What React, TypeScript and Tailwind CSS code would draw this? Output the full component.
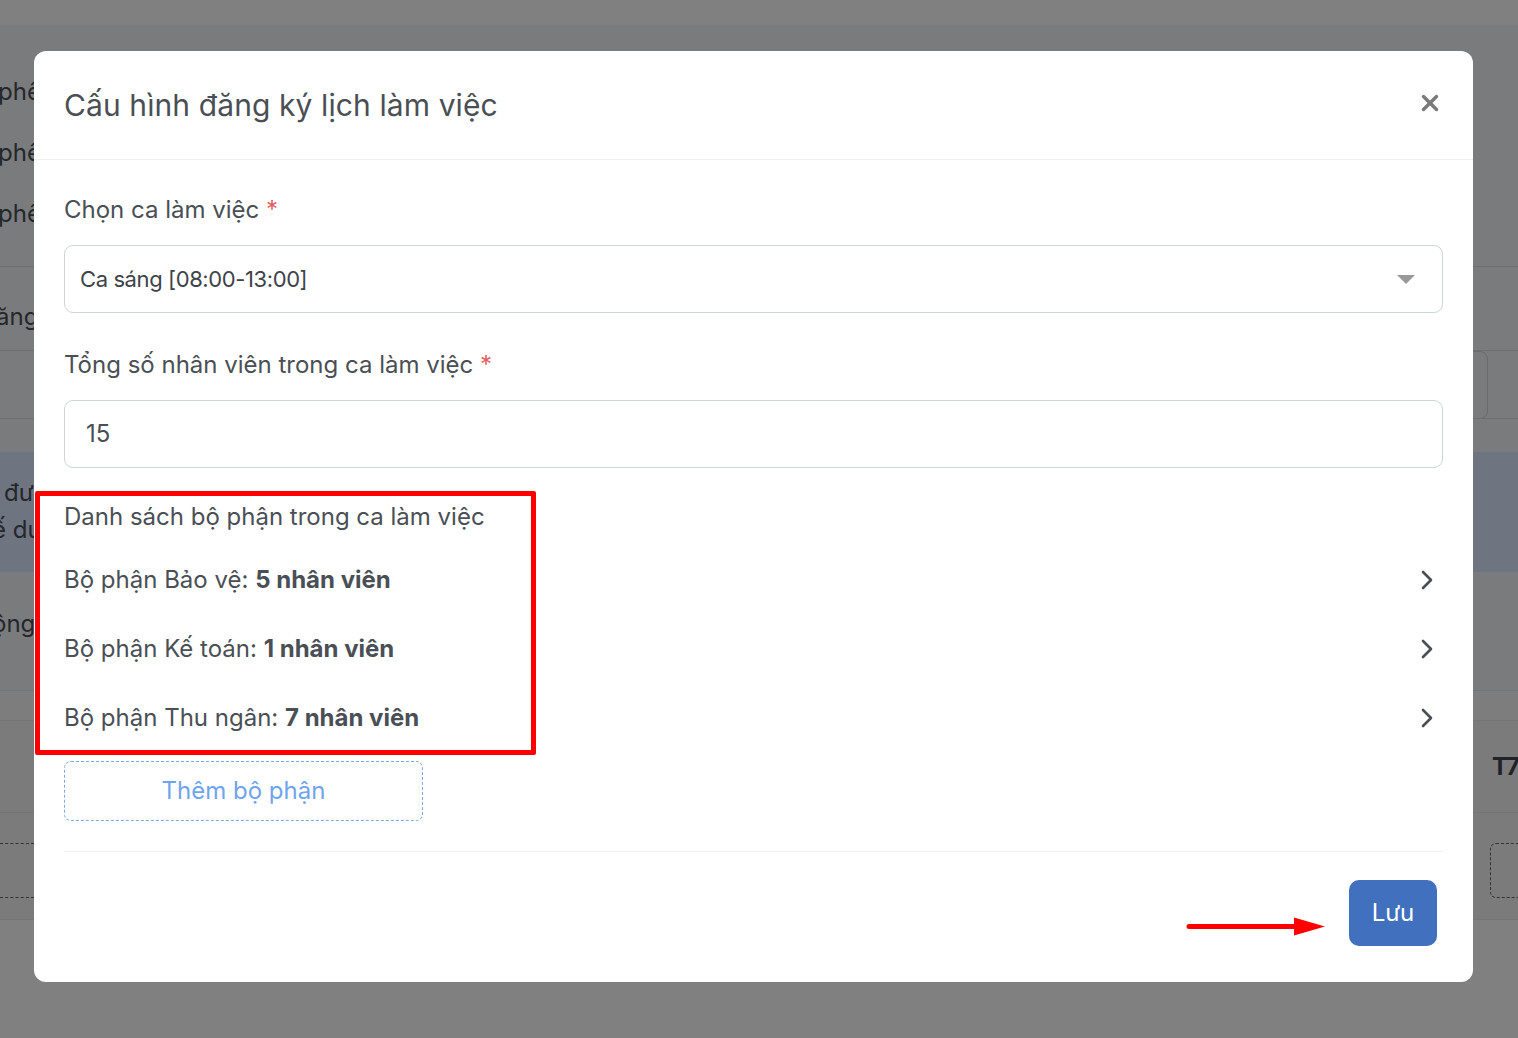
import { X } from "lucide-react";

const DEPARTMENTS = [
  { name: "Bảo vệ", count: 5 },
  { name: "Kế toán", count: 1 },
  { name: "Thu ngân", count: 7 },
];

function Chevron() {
  return (
    <svg width="14" height="20" viewBox="0 0 14 20" fill="none">
      <polyline
        points="3,2 11,10 3,18"
        stroke="#4a4f55"
        strokeWidth="2.6"
        strokeLinecap="round"
        strokeLinejoin="round"
      />
    </svg>
  );
}

function Backdrop() {
  return (
    <div className="flex flex-col w-full text-[24px] text-[#24272b]">
      <div className="h-[25px] bg-[#808080]" />

      {/* page behind the modal, dimmed */}
      <div className="h-[241px] bg-[#7a7b7d] pt-[49px] flex flex-col gap-[25px] leading-[36px]">
        <div className="-ml-[2px]">phê</div>
        <div className="-ml-[2px]">phê</div>
        <div className="-ml-[2px]">phê</div>
      </div>
      <div className="h-[84px] bg-[#7a7b7d] border-t border-[#6e6f71] pt-[32px] leading-[36px]">
        <div className="-ml-[4px]">ăng</div>
      </div>
      <div className="h-[68px] bg-[#7a7b7d] border-t border-[#6e6f71] flex justify-end pr-[30px]">
        <div className="w-[60px] h-[68px] rounded-[8px] border border-[#6a6b6d]" />
      </div>
      <div className="h-[34px] bg-[#7a7b7d] border-t border-[#6e6f71]" />
      <div className="h-[120px] bg-[#6e7480] pt-[22px] leading-[37px]">
        <div className="ml-[4px]">đư</div>
        <div className="-ml-[8px]">ế du</div>
      </div>
      <div className="h-[118px] bg-[#7a7b7d] pt-[34px] leading-[36px]">
        <div className="-ml-[8px]">ộng</div>
      </div>
      <div className="h-[30px] bg-[#7d7d7e] border-t border-[#747577]" />
      <div className="h-[92px] bg-[#7b7b7c] border-t border-[#747577] flex justify-end items-center">
        <div className="font-bold text-[#1f2226] mr-[-6px] w-[32px]">T7</div>
      </div>
      <div className="h-[107px] bg-[#7b7b7c] border-t border-[#747577] pt-[30px] flex justify-between">
        <div className="w-[60px] h-[55px] border-y border-dashed border-[#333]" />
        <div className="w-[60px] h-[55px] border border-dashed border-[#333] rounded-[6px] mr-[-32px]" />
      </div>
      <div className="flex-1 h-[119px] bg-[#808080] border-t border-[#747577]" />
    </div>
  );
}

export default function App() {
  return (
    <div
      className="relative w-full h-[1038px] overflow-hidden bg-[#808080]"
      style={{ fontFamily: "Inter, 'Noto Sans', sans-serif" }}
    >
      <Backdrop />

      {/* MODAL */}
      <div className="absolute left-[34px] top-[51px] w-[1439px] h-[931px] bg-white rounded-[12px] flex flex-col text-[#4a4f55]">
        <div className="h-[109px] shrink-0 flex items-center justify-between pl-[30px] pr-[30px] border-b border-[#eef0f6]">
          <h2 className="text-[30px] leading-[40px] tracking-[0.1px]">Cấu hình đăng ký lịch làm việc</h2>
          <X size={26} strokeWidth={3.2} className="text-[#7a7a7a] -mt-[4px]" />
        </div>

        <div className="flex flex-col px-[30px] pt-[32px]">
          <label className="text-[24px] leading-[36px]">
            Chọn ca làm việc <span className="text-[#e2605f]">*</span>
          </label>
          <div className="mt-[17px] h-[68px] rounded-[9px] border border-[#ced4da] flex items-center justify-between pl-[15px] pr-[26px]">
            <span className="text-[22px] text-[#3e4349] tracking-[-0.4px]">Ca sáng [08:00-13:00]</span>
            <svg width="20" height="11" viewBox="0 0 20 11">
              <polygon points="1,1 19,1 10,10" fill="#999" />
            </svg>
          </div>

          <label className="mt-[34px] text-[24px] leading-[36px]">
            Tổng số nhân viên trong ca làm việc <span className="text-[#e2605f]">*</span>
          </label>
          <div className="mt-[17px] h-[68px] rounded-[9px] border border-[#ced4da] flex items-center pl-[21px]">
            <span className="text-[24px] text-[#4a4f55]">15</span>
          </div>

          <div className="mt-[31px] text-[24px] leading-[36px]">
            Danh sách bộ phận trong ca làm việc
          </div>
          <div className="mt-[10px] flex flex-col">
            {DEPARTMENTS.map((d) => (
              <div key={d.name} className="h-[69px] flex items-center justify-between pr-[9px]">
                <span className="text-[24px]">
                  Bộ phận {d.name}: <b className="font-bold">{d.count} nhân viên</b>
                </span>
                <Chevron />
              </div>
            ))}
          </div>

          <button className="mt-[9px] w-[359px] h-[60px] rounded-[7px] border border-dashed border-[#7ea9ee] text-[24px] text-[#6fa4ef]">
            Thêm bộ phận
          </button>

          <div className="mt-[30px] border-t border-[#eef0f6]" />

          <div className="flex justify-end items-center pt-[28px] pr-[6px]">
            <button className="w-[88px] h-[66px] rounded-[10px] bg-[#4170be] text-white text-[24px]">
              Lưu
            </button>
          </div>
        </div>
      </div>

      {/* annotation: red box */}
      <div className="absolute left-[35px] top-[491px] w-[501px] h-[264px] border-[5px] border-[#ff0000] rounded-[2px]" />

      {/* annotation: red arrow */}
      <svg className="absolute left-[1184px] top-[914px]" width="144" height="24" viewBox="0 0 144 24">
        <line x1="5" y1="12.5" x2="115" y2="12.5" stroke="#ff0000" strokeWidth="5" strokeLinecap="round" />
        <polygon points="110,3.5 141,12.5 110,21.5" fill="#ff0000" />
      </svg>
    </div>
  );
}
